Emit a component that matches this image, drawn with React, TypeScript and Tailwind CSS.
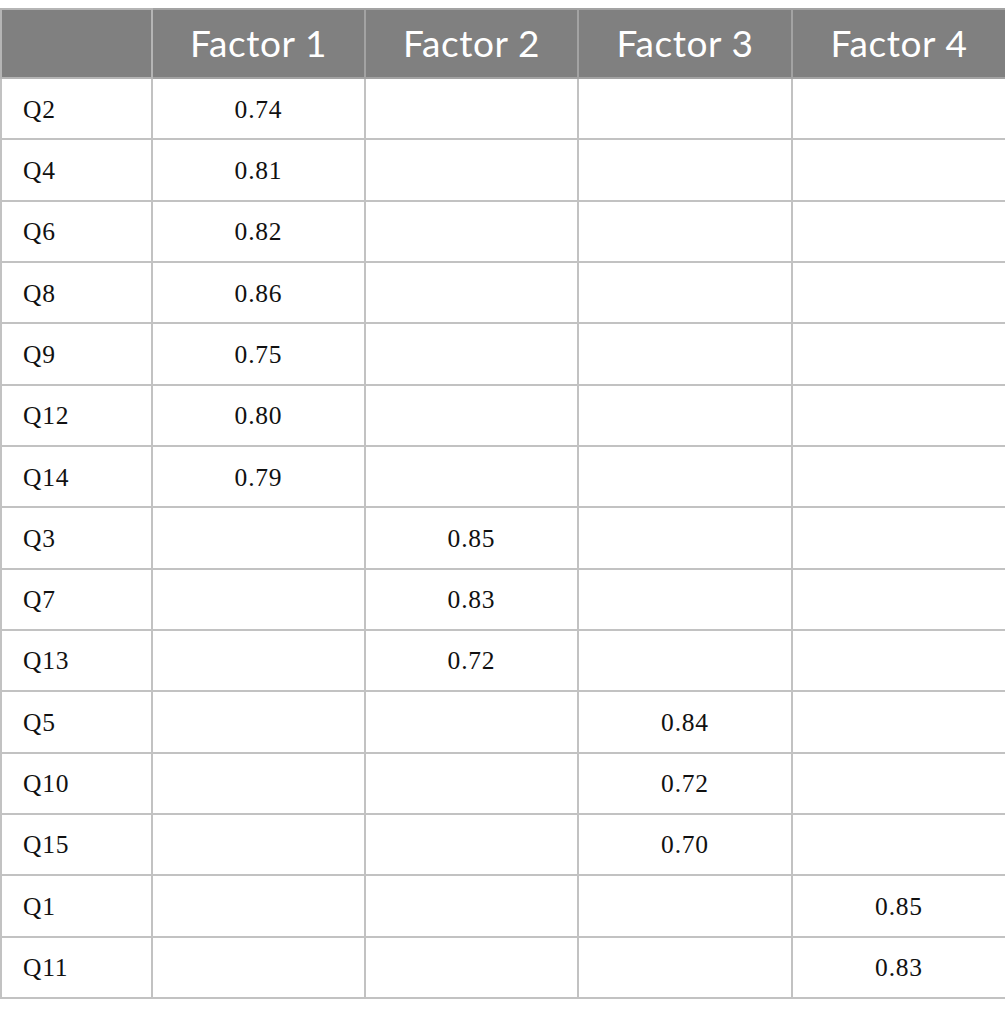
import React from "react";

const rows: [string, number, string][] = [
  ["Q2", 1, "0.74"],
  ["Q4", 1, "0.81"],
  ["Q6", 1, "0.82"],
  ["Q8", 1, "0.86"],
  ["Q9", 1, "0.75"],
  ["Q12", 1, "0.80"],
  ["Q14", 1, "0.79"],
  ["Q3", 2, "0.85"],
  ["Q7", 2, "0.83"],
  ["Q13", 2, "0.72"],
  ["Q5", 3, "0.84"],
  ["Q10", 3, "0.72"],
  ["Q15", 3, "0.70"],
  ["Q1", 4, "0.85"],
  ["Q11", 4, "0.83"],
];

export default function App() {
  return (
    <div className="w-[1005px] h-[1016px] bg-white pt-[8px]">
      <table className="w-[1005px] table-fixed border-collapse">
        <colgroup>
          <col className="w-[151px]" />
          <col className="w-[213px]" />
          <col className="w-[213px]" />
          <col className="w-[214px]" />
          <col className="w-[214px]" />
        </colgroup>
        <thead>
          <tr className="h-[69px] bg-[#808080]">
            <th className="border-2 border-[#b5b5b5]"></th>
            {[1, 2, 3, 4].map((n) => (
              <th
                key={n}
                className="border-2 border-[#a3a3a3] text-white font-normal text-[37px] text-center font-['Lato',sans-serif] tracking-[0.6px] pb-[2px]"
              >
                Factor {n}
              </th>
            ))}
          </tr>
        </thead>
        <tbody>
          {rows.map(([q, col, v]) => (
            <tr key={q} className="h-[61.33px]">
              <td className="border-2 border-[#c2c2c2] pl-[21px] pt-[2px] text-[25.5px] text-[#111111] font-['Liberation_Serif',serif] tracking-[0.8px]">
                {q}
              </td>
              {[1, 2, 3, 4].map((c) => (
                <td
                  key={c}
                  className="border-2 border-[#c2c2c2] text-center pt-[2px] text-[25.5px] text-[#111111] font-['Liberation_Serif',serif] tracking-[0.8px]"
                >
                  {c === col ? v : ""}
                </td>
              ))}
            </tr>
          ))}
        </tbody>
      </table>
    </div>
  );
}
